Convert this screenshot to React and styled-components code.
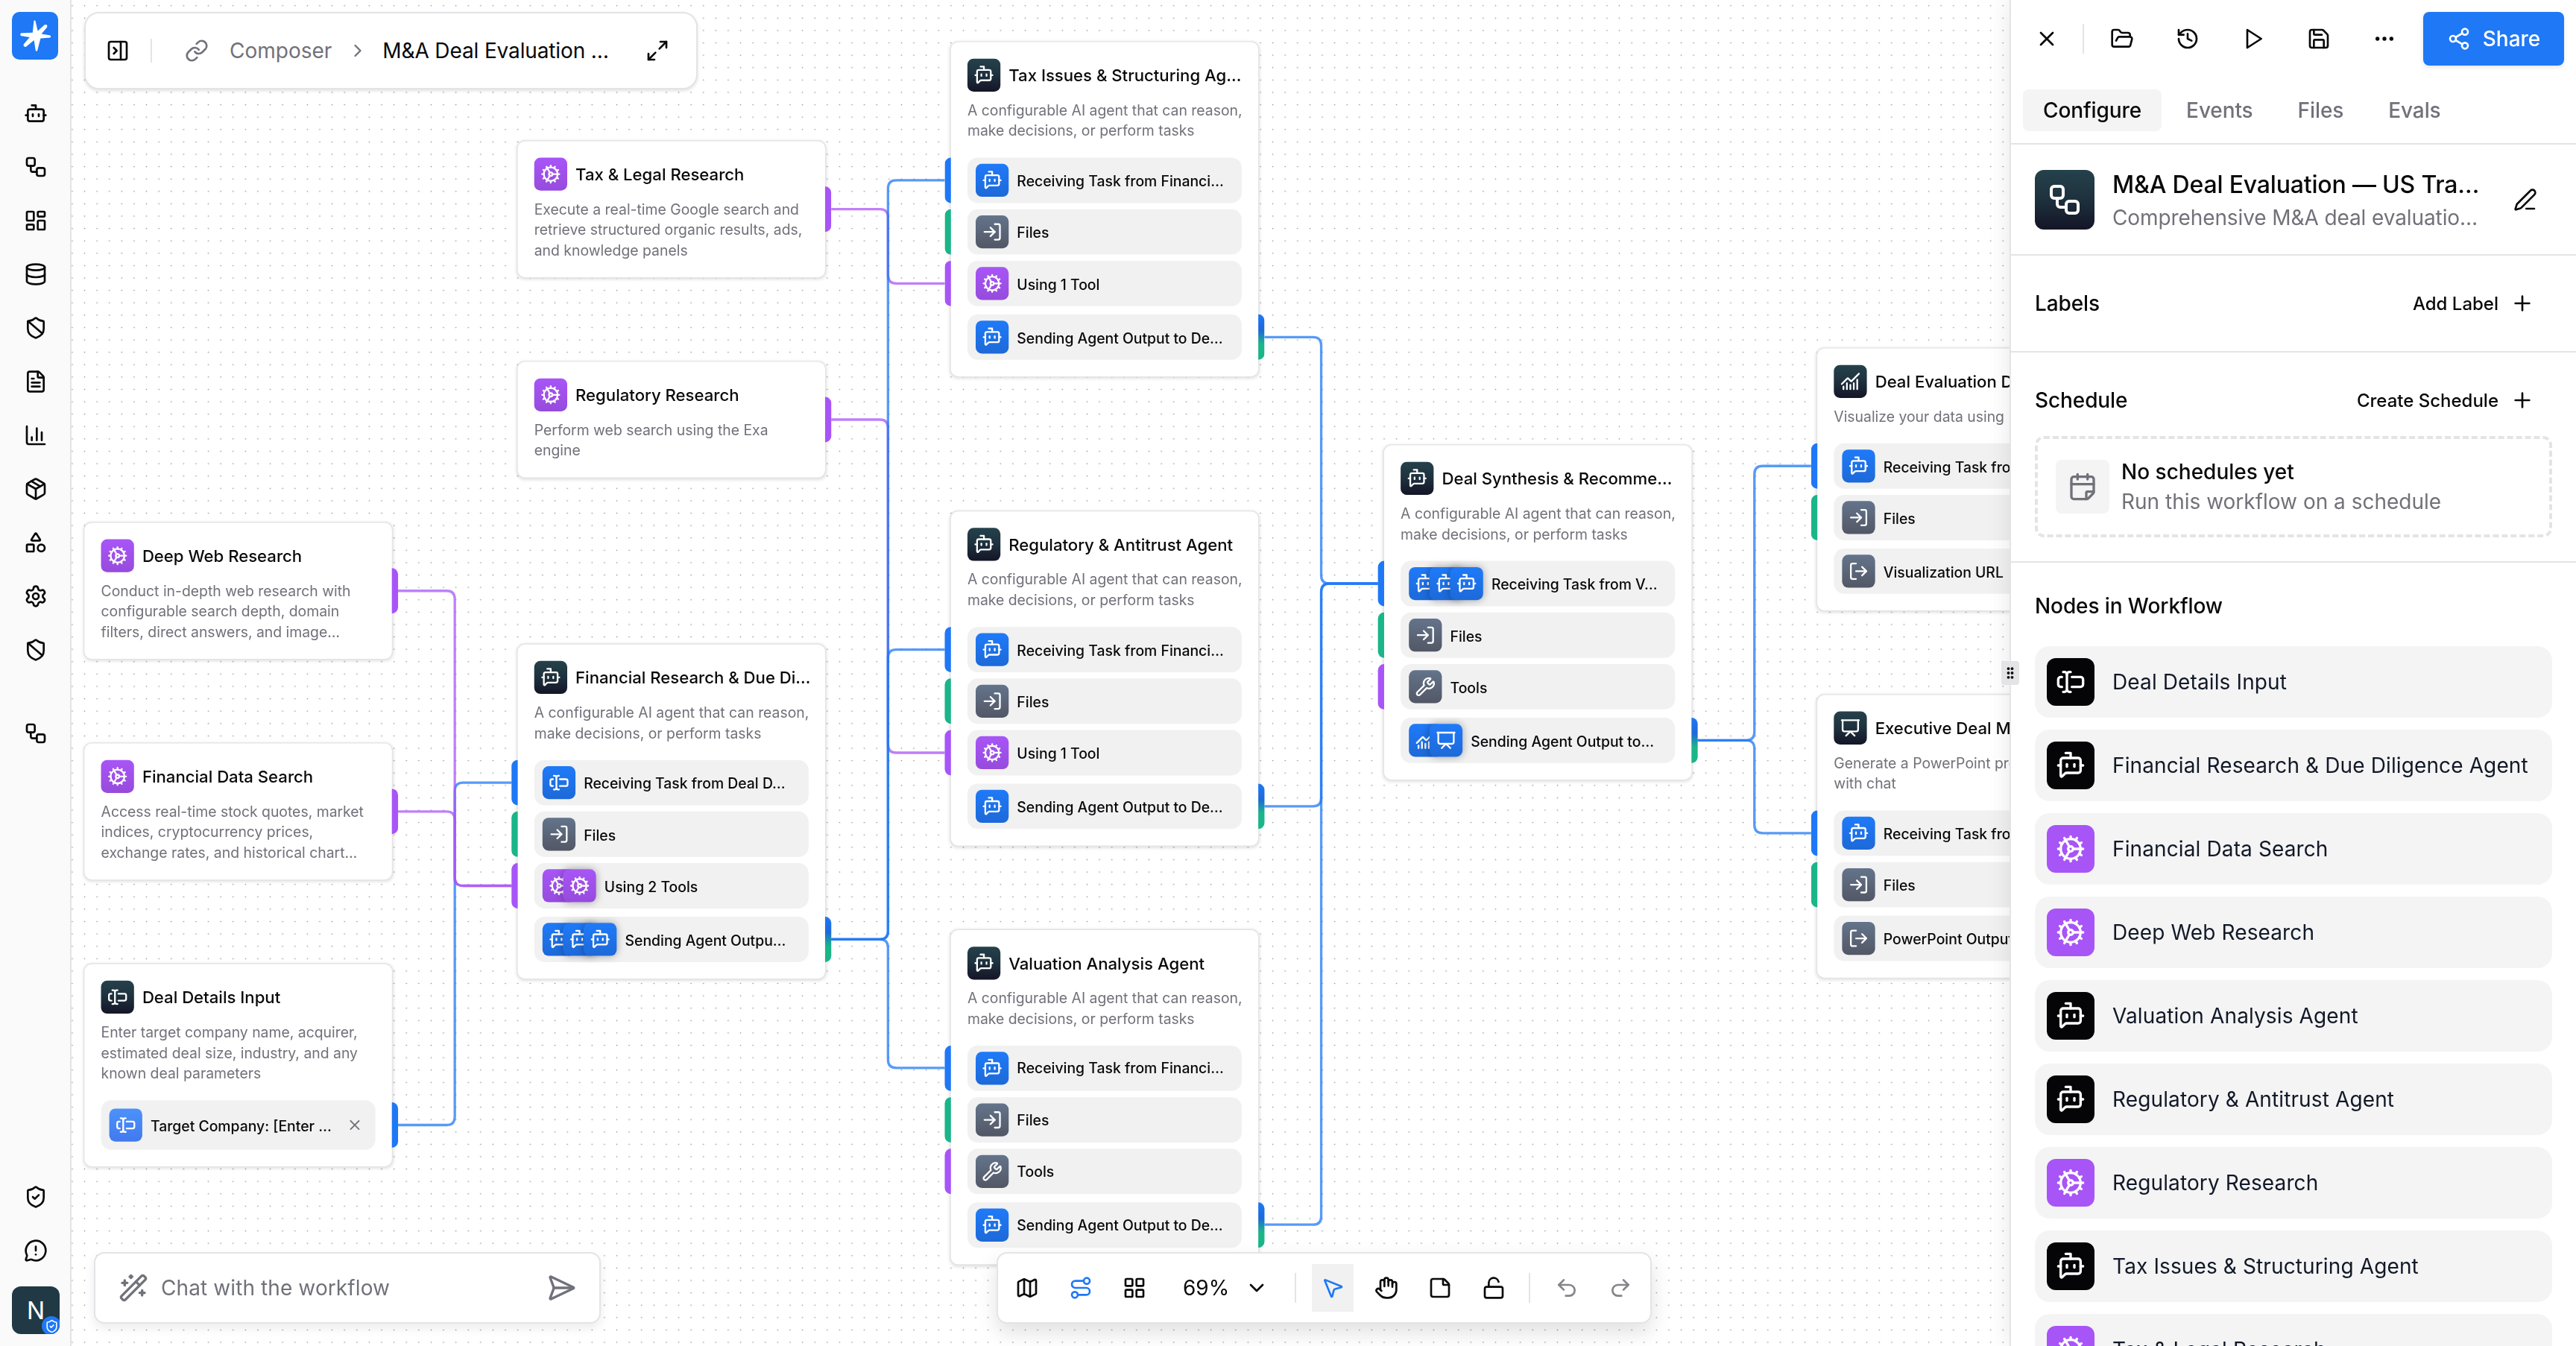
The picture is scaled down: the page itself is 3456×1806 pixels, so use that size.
import React from "react";
import styled, { createGlobalStyle, css } from "styled-components";
import {
  Bot,
  BotMessageSquare,
  CalendarFold,
  ChartColumn,
  ChartNoAxesCombined,
  ChevronDown,
  ChevronRight,
  Cog,
  Database,
  Ellipsis,
  FileText,
  FolderOpen,
  GripVertical,
  Hand,
  History,
  LayoutDashboard,
  LayoutGrid,
  Link,
  LockOpen,
  LogIn,
  LogOut,
  Map as MapIcon,
  Maximize2,
  MessageCircleWarning,
  MousePointer2,
  Package,
  PanelRightClose,
  PenLine,
  Plus,
  Presentation,
  Redo2,
  Route,
  Save,
  SendHorizontal,
  Settings,
  Shapes,
  Share2,
  ShieldBan,
  ShieldCheck,
  StickyNote,
  TextCursorInput,
  Undo2,
  WandSparkles,
  Workflow,
  Wrench,
  X,
} from "lucide-react";

const SCALE = 1.3838;
const BLUE = "#1f78f5";
const PURPLE = "#a855f7";
const GREEN = "#1ab588";
const INK = "#09090b";
const MUTED = "#71717a";
const LINE = "#e4e4e7";

const gradients = {
  dark: "linear-gradient(#25414b, #1f333f 45%, #141527)",
  blue: "linear-gradient(#1f7af8, #1d69d8)",
  sky: "linear-gradient(#4c92fa, #4279ee)",
  purple: "linear-gradient(#a855f7, #964bdc)",
  slate: "linear-gradient(#64748b, #525765)",
  black: "#050507",
  violet: PURPLE,
};

const sidebarIcons = [
  Bot,
  Workflow,
  LayoutDashboard,
  Database,
  ShieldBan,
  FileText,
  ChartColumn,
  Package,
  Shapes,
  Settings,
  ShieldBan,
];

const AGENT_TEXT = ["A configurable AI agent that can reason,", "make decisions, or perform tasks"];

const files = { icons: [LogIn], tone: "slate", label: "Files", port: GREEN };
const noTools = { icons: [Wrench], tone: "slate", label: "Tools", port: PURPLE };
const oneTool = { icons: [Cog], tone: "purple", label: "Using 1 Tool", port: PURPLE };
const fromFinance = {
  icons: [BotMessageSquare],
  tone: "blue",
  label: "Receiving Task from Financi…",
  port: BLUE,
};
const toDeal = { icons: [BotMessageSquare], tone: "blue", label: "Sending Agent Output to De…" };

const nodes = [
  {
    x: 0,
    y: 0,
    icon: Cog,
    tone: "purple",
    title: "Deep Web Research",
    text: ["Conduct in-depth web research with", "configurable search depth, domain", "filters, direct answers, and image…"],
    tool: true,
  },
  {
    x: 0,
    y: 214,
    icon: Cog,
    tone: "purple",
    title: "Financial Data Search",
    text: ["Access real-time stock quotes, market", "indices, cryptocurrency prices,", "exchange rates, and historical chart…"],
    tool: true,
  },
  {
    x: 0,
    y: 428,
    icon: TextCursorInput,
    tone: "dark",
    title: "Deal Details Input",
    text: ["Enter target company name, acquirer,", "estimated deal size, industry, and any", "known deal parameters"],
    field: "Target Company: [Enter …",
  },
  {
    x: 420,
    y: -370,
    icon: Cog,
    tone: "purple",
    title: "Tax & Legal Research",
    text: ["Execute a real-time Google search and", "retrieve structured organic results, ads,", "and knowledge panels"],
    tool: true,
  },
  {
    x: 420,
    y: -156,
    icon: Cog,
    tone: "purple",
    title: "Regulatory Research",
    text: ["Perform web search using the Exa", "engine"],
    tool: true,
  },
  {
    x: 420,
    y: 118,
    icon: BotMessageSquare,
    tone: "dark",
    title: "Financial Research & Due Di…",
    text: AGENT_TEXT,
    inputs: [
      { icons: [TextCursorInput], tone: "blue", label: "Receiving Task from Deal D…", port: BLUE },
      files,
      { icons: [Cog, Cog], tone: "purple", label: "Using 2 Tools", port: PURPLE },
    ],
    output: {
      icons: [BotMessageSquare, BotMessageSquare, BotMessageSquare],
      tone: "blue",
      label: "Sending Agent Outpu…",
    },
  },
  {
    x: 840,
    y: -466,
    icon: BotMessageSquare,
    tone: "dark",
    title: "Tax Issues & Structuring Ag…",
    text: AGENT_TEXT,
    inputs: [fromFinance, files, oneTool],
    output: toDeal,
  },
  {
    x: 840,
    y: -11,
    icon: BotMessageSquare,
    tone: "dark",
    title: "Regulatory & Antitrust Agent",
    text: AGENT_TEXT,
    inputs: [fromFinance, files, oneTool],
    output: toDeal,
  },
  {
    x: 840,
    y: 394.6,
    icon: BotMessageSquare,
    tone: "dark",
    title: "Valuation Analysis Agent",
    text: AGENT_TEXT,
    inputs: [fromFinance, files, noTools],
    output: toDeal,
  },
  {
    x: 1260,
    y: -75,
    icon: BotMessageSquare,
    tone: "dark",
    title: "Deal Synthesis & Recomme…",
    text: AGENT_TEXT,
    inputs: [
      {
        icons: [BotMessageSquare, BotMessageSquare, BotMessageSquare],
        tone: "blue",
        label: "Receiving Task from V…",
        port: BLUE,
      },
      files,
      noTools,
    ],
    output: { icons: [ChartNoAxesCombined, Presentation], tone: "blue", label: "Sending Agent Output to…" },
  },
  {
    x: 1680,
    y: -169,
    icon: ChartNoAxesCombined,
    tone: "dark",
    title: "Deal Evaluation Da…",
    text: ["Visualize your data using li…"],
    inputs: [{ ...fromFinance, label: "Receiving Task from D…" }, files],
    output: { icons: [LogOut], tone: "slate", label: "Visualization URL", quiet: true },
  },
  {
    x: 1680,
    y: 167,
    icon: Presentation,
    tone: "dark",
    title: "Executive Deal Me…",
    text: ["Generate a PowerPoint presen…", "with chat"],
    inputs: [{ ...fromFinance, label: "Receiving Task from D…" }, files],
    output: { icons: [LogOut], tone: "slate", label: "PowerPoint Output", quiet: true },
  },
];

// [source x, source y, target x, target y, colour]
const edges = [
  [725, -303, 835, -231, PURPLE],
  [725, -99, 835, 224, PURPLE],
  [725, 405, 835, -331, BLUE],
  [725, 405, 835, 124, BLUE],
  [725, 405, 835, 529.6, BLUE],
  [305, 585, 415, 253, BLUE],
  [305, 67, 415, 353, PURPLE],
  [305, 281, 415, 353, PURPLE],
  [1145, -179, 1255, 60, BLUE],
  [1145, 276, 1255, 60, BLUE],
  [1145, 681.6, 1255, 60, BLUE],
  [1565, 212, 1675, -54, BLUE],
  [1565, 212, 1675, 302, BLUE],
];

const workflowNodes = [
  [TextCursorInput, "black", "Deal Details Input"],
  [BotMessageSquare, "black", "Financial Research & Due Diligence Agent"],
  [Cog, "violet", "Financial Data Search"],
  [Cog, "violet", "Deep Web Research"],
  [BotMessageSquare, "black", "Valuation Analysis Agent"],
  [BotMessageSquare, "black", "Regulatory & Antitrust Agent"],
  [Cog, "violet", "Regulatory Research"],
  [BotMessageSquare, "black", "Tax Issues & Structuring Agent"],
  [Cog, "violet", "Tax & Legal Research"],
];

function stepPath([sx, sy, tx, ty]) {
  const mid = (sx + tx) / 2;
  const r = 8;
  const d = ty > sy ? 1 : -1;
  return `M${sx} ${sy} H${mid - r} Q${mid} ${sy} ${mid} ${sy + r * d} V${ty - r * d} Q${mid} ${ty} ${mid + r} ${ty} H${tx}`;
}

function PlayIcon() {
  return (
    <svg width="32" height="32" viewBox="0 0 24 24" fill="none" stroke="currentColor" strokeWidth="2" strokeLinejoin="round">
      <path d="M6 3 20 12 6 21Z" />
    </svg>
  );
}

function StarLogo() {
  return (
    <svg width="44" height="44" viewBox="0 0 44 44" fill="#fff">
      <path d="M20.4 2.2Q21.4 .2 22.6 2.2L25.6 15.4 34.8 7.2Q39.2 6.6 38.2 10.4L30.6 19.4 42.4 21.4Q44 22.8 42.4 24.4L29.4 25.6 25.2 41.8Q24 43.8 22.8 41.8L20.6 28 9.6 37Q6 37 6.6 33.6L14.8 24 3 22Q1.2 20.4 3 18.6L18.8 17.8Z" />
    </svg>
  );
}

function Row({ item, side }) {
  return (
    <RowWrap>
      {side === "in" && <Port side="left" fill={item.port} />}
      {side === "out" && !item.quiet && <Port side="right" fill={`linear-gradient(${BLUE}, #1d69d8 35%, ${GREEN} 65%)`} />}
      <RowBody>
        <IconStack>
          {item.icons.map((Icon, i) => (
            <Tile key={i} tone={item.tone} stacked={i > 0}>
              <Icon size={20} />
            </Tile>
          ))}
        </IconStack>
        <RowLabel>{item.label}</RowLabel>
      </RowBody>
    </RowWrap>
  );
}

function Node({ node }) {
  const Icon = node.icon;
  return (
    <NodeBox style={{ left: node.x, top: node.y }}>
      {node.tool && <Port side="right" fill={PURPLE} middle />}
      <NodeCard>
        <NodeHead>
          <Tile tone={node.tone}>
            <Icon size={20} />
          </Tile>
          <NodeTitle>{node.title}</NodeTitle>
        </NodeHead>
        <NodeText>
          {node.text.map((line) => (
            <div key={line}>{line}</div>
          ))}
        </NodeText>
        {node.field && (
          <RowWrap push>
            <Port side="right" fill={BLUE} inset={2} />
            <RowBody tall>
              <Tile tone="sky">
                <TextCursorInput size={20} />
              </Tile>
              <RowLabel>{node.field}</RowLabel>
              <ClearIcon size={16} />
            </RowBody>
          </RowWrap>
        )}
        {node.inputs && (
          <RowList>
            {node.inputs.map((item) => (
              <Row key={item.label} item={item} side="in" />
            ))}
          </RowList>
        )}
        {node.output && (
          <OutputList>
            <Row item={node.output} side="out" />
          </OutputList>
        )}
      </NodeCard>
    </NodeBox>
  );
}

export default function App() {
  return (
    <Shell>
      <GlobalStyle />
      <Sidebar>
        <Logo>
          <StarLogo />
        </Logo>
        <SideNav>
          {sidebarIcons.map((Icon, i) => (
            <SideItem key={i}>
              <Icon size={32} />
            </SideItem>
          ))}
        </SideNav>
        <SidePinned>
          <Workflow size={32} />
        </SidePinned>
        <SideFoot>
          <SideItem>
            <ShieldCheck size={32} />
          </SideItem>
          <SideItem>
            <MessageCircleWarning size={32} />
          </SideItem>
        </SideFoot>
        <Avatar>
          N
          <AvatarBadge>
            <ShieldCheck size={19} />
          </AvatarBadge>
        </Avatar>
      </Sidebar>

      <Canvas>
        <Dots>
          <defs>
            <pattern id="dots" x="-7.4" y="-0.65" width="16.605" height="16.605" patternUnits="userSpaceOnUse">
              <circle cx="8.3" cy="8.3" r="0.85" fill="#94949a" />
            </pattern>
          </defs>
          <rect width="100%" height="100%" fill="url(#dots)" />
        </Dots>
        <Viewport>
          <Edges>
            {edges.map((edge, i) => (
              <path key={i} d={stepPath(edge)} stroke={edge[4]} />
            ))}
          </Edges>
          {nodes.map((node) => (
            <Node key={node.title} node={node} />
          ))}
        </Viewport>

        <Breadcrumb>
          <PanelRightClose size={32} />
          <BarRule />
          <Crumb>
            <Link size={32} />
            <span>Composer</span>
            <ChevronRight size={28} />
          </Crumb>
          <CrumbTitle>M&amp;A Deal Evaluation …</CrumbTitle>
          <Maximize2 size={32} />
        </Breadcrumb>

        <ChatBox>
          <WandSparkles size={40} />
          <ChatHint>Chat with the workflow</ChatHint>
          <SendHorizontal size={40} />
        </ChatBox>

        <Toolbar>
          <Tool>
            <MapIcon size={32} />
          </Tool>
          <Tool accent>
            <Route size={32} />
          </Tool>
          <Tool>
            <LayoutGrid size={32} />
          </Tool>
          <ZoomLevel>
            69%
            <ChevronDown size={32} />
          </ZoomLevel>
          <ToolRule />
          <Tool accent active>
            <MousePointer2 size={32} />
          </Tool>
          <Tool>
            <Hand size={32} />
          </Tool>
          <Tool>
            <StickyNote size={32} />
          </Tool>
          <Tool>
            <LockOpen size={32} />
          </Tool>
          <ToolRule />
          <Tool faded>
            <Undo2 size={32} />
          </Tool>
          <Tool faded>
            <Redo2 size={32} />
          </Tool>
        </Toolbar>
      </Canvas>

      <Panel>
        <Grip>
          <GripVertical size={20} strokeWidth={2.6} />
        </Grip>
        <PanelHead>
          <Actions>
            <IconButton>
              <X size={32} />
            </IconButton>
            <ActionRule />
            <IconButton>
              <FolderOpen size={32} />
            </IconButton>
            <IconButton>
              <History size={32} />
            </IconButton>
            <IconButton>
              <PlayIcon />
            </IconButton>
            <IconButton>
              <Save size={32} />
            </IconButton>
            <IconButton>
              <Ellipsis size={32} />
            </IconButton>
            <ShareButton>
              <Share2 size={32} />
              Share
            </ShareButton>
          </Actions>
          <Tabs>
            <Tab active>Configure</Tab>
            <Tab>Events</Tab>
            <Tab>Files</Tab>
            <Tab>Evals</Tab>
          </Tabs>
        </PanelHead>

        <Info>
          <InfoIcon>
            <Workflow size={48} />
          </InfoIcon>
          <InfoText>
            <InfoTitle>M&amp;A Deal Evaluation — US Tra…</InfoTitle>
            <InfoDesc>Comprehensive M&amp;A deal evaluatio…</InfoDesc>
          </InfoText>
          <PenLine size={32} />
        </Info>

        <Section>
          <SectionHead>
            <SectionTitle>Labels</SectionTitle>
            <AddButton>
              Add Label
              <Plus size={32} />
            </AddButton>
          </SectionHead>
        </Section>

        <Section>
          <SectionHead>
            <SectionTitle>Schedule</SectionTitle>
            <AddButton>
              Create Schedule
              <Plus size={32} />
            </AddButton>
          </SectionHead>
          <EmptyCard>
            <EmptyIcon>
              <CalendarFold size={40} />
            </EmptyIcon>
            <div>
              <EmptyTitle>No schedules yet</EmptyTitle>
              <EmptyText>Run this workflow on a schedule</EmptyText>
            </div>
          </EmptyCard>
        </Section>

        <NodeSection>
          <SectionTitle>Nodes in Workflow</SectionTitle>
          <NodeList>
            {workflowNodes.map(([Icon, tone, name]) => (
              <NodeItem key={name}>
                <NodeItemIcon tone={tone}>
                  <Icon size={40} />
                </NodeItemIcon>
                {name}
              </NodeItem>
            ))}
          </NodeList>
        </NodeSection>
      </Panel>
    </Shell>
  );
}

const GlobalStyle = createGlobalStyle`
  * {
    box-sizing: border-box;
  }

  body {
    margin: 0;
    background: #fff;
    color: ${INK};
    font-family: Inter, "Liberation Sans", sans-serif;
    font-size: 28px;
    -webkit-font-smoothing: antialiased;
  }

  svg {
    flex-shrink: 0;
  }
`;

const Shell = styled.div`
  display: flex;
  height: 1806px;
  overflow: hidden;
`;

const Sidebar = styled.nav`
  display: flex;
  flex-direction: column;
  width: 96px;
  padding: 16px 0 16px 16px;
  background: #fafafa;
  border-right: 2px solid ${LINE};
`;

const Logo = styled.div`
  display: flex;
  align-items: center;
  justify-content: center;
  width: 62px;
  height: 64px;
  border-radius: 10px;
  background: ${BLUE};
`;

const SideNav = styled.div`
  margin-top: 36px;
`;

const SideItem = styled.div`
  display: flex;
  align-items: center;
  justify-content: center;
  width: 64px;
  height: 72px;
`;

const SidePinned = styled(SideItem)`
  margin-top: 40px;
`;

const SideFoot = styled.div`
  margin-top: auto;
  margin-bottom: 12px;
`;

const Avatar = styled.div`
  position: relative;
  display: flex;
  align-items: center;
  justify-content: center;
  width: 64px;
  height: 64px;
  border-radius: 12px;
  overflow: hidden;
  background: #213945;
  color: #fff;
  font-size: 32px;
`;

const AvatarBadge = styled.span`
  position: absolute;
  right: -2px;
  bottom: -2px;
  display: flex;
  align-items: center;
  justify-content: center;
  width: 26px;
  height: 26px;
  border-radius: 50%;
  background: ${BLUE};
`;

const Canvas = styled.main`
  position: relative;
  flex: 1;
  overflow: hidden;
`;

const Dots = styled.svg`
  position: absolute;
  inset: 0;
  width: 100%;
  height: 100%;
`;

const Viewport = styled.div`
  position: absolute;
  left: 16.4px;
  top: 699.8px;
  transform: scale(${SCALE});
  transform-origin: 0 0;
`;

const Edges = styled.svg`
  position: absolute;
  left: 0;
  top: 0;
  width: 1px;
  height: 1px;
  overflow: visible;
  fill: none;
  stroke-width: 2.4;

  path {
    stroke-opacity: 0.75;
  }
`;

const NodeBox = styled.div`
  position: absolute;
  width: 300px;
`;

const NodeCard = styled.div`
  padding: 16px;
  border: 1px solid ${LINE};
  border-radius: 8px;
  background: #fff;
  box-shadow: 0 1px 3px rgba(0, 0, 0, 0.12);
`;

const NodeHead = styled.div`
  display: flex;
  align-items: center;
  gap: 8px;
`;

const NodeTitle = styled.div`
  font-size: 16px;
  font-weight: 500;
  line-height: 24px;
  white-space: nowrap;
`;

const NodeText = styled.div`
  margin-top: 8px;
  color: ${MUTED};
  font-size: 14px;
  line-height: 20px;
  white-space: nowrap;
`;

const Tile = styled.div`
  display: flex;
  align-items: center;
  justify-content: center;
  flex-shrink: 0;
  width: 32px;
  height: 32px;
  border-radius: 6px;
  background: ${(p) => gradients[p.tone]};
  color: #fff;
  ${(p) =>
    p.stacked &&
    css`
      margin-left: -12px;
      box-shadow: 0 0 8px rgba(0, 0, 0, 0.35);
    `}
`;

const RowList = styled.div`
  display: flex;
  flex-direction: column;
  gap: 6px;
  margin-top: 16px;
`;

const OutputList = styled.div`
  margin-top: 8px;
`;

const RowWrap = styled.div`
  position: relative;
  ${(p) => p.push && "margin-top: 16px;"}
`;

const RowBody = styled.div`
  display: flex;
  align-items: center;
  gap: 8px;
  height: ${(p) => (p.tall ? 48 : 44)}px;
  padding: 0 8px;
  border-radius: 10px;
  background: #f1f1f2;
`;

const IconStack = styled.div`
  display: flex;
`;

const RowLabel = styled.div`
  flex: 1;
  font-size: 14px;
  font-weight: 500;
  white-space: nowrap;
`;

const ClearIcon = styled(X)`
  margin-right: 4px;
  color: ${MUTED};
`;

// connection tab that sticks out of the card edge
const Port = styled.span`
  position: absolute;
  top: ${(p) => (p.middle ? "calc(50% - 22px)" : `${p.inset || 0}px`)};
  ${(p) => p.side}: ${(p) => (p.middle ? -5 : -22)}px;
  width: 6px;
  height: 44px;
  border-radius: ${(p) => (p.side === "left" ? "6px 0 0 6px" : "0 6px 6px 0")};
  background: ${(p) => p.fill};
`;

const floating = css`
  position: absolute;
  display: flex;
  align-items: center;
  border: 2px solid ${LINE};
  background: #fff;
`;

const Breadcrumb = styled.header`
  ${floating}
  left: 17px;
  top: 16px;
  width: 823px;
  height: 104px;
  padding: 0 36px 0 27px;
  border-radius: 20px;
  box-shadow: 0 2px 4px rgba(0, 0, 0, 0.12);
`;

const BarRule = styled.span`
  width: 2px;
  height: 32px;
  margin: 0 44px 0 28px;
  background: ${LINE};
`;

const Crumb = styled.div`
  display: flex;
  align-items: center;
  gap: 28px;
  color: ${MUTED};

  svg:last-child {
    margin-left: -7px;
  }
`;

const CrumbTitle = styled.div`
  flex: 1;
  margin-left: 19px;
  letter-spacing: -0.13px;
  white-space: nowrap;
`;

const ChatBox = styled.div`
  ${floating}
  left: 30px;
  bottom: 30px;
  width: 680px;
  height: 96px;
  padding: 0 31px;
  border-radius: 14px;
  color: ${MUTED};
  box-shadow: 0 6px 14px rgba(0, 0, 0, 0.08);
`;

const ChatHint = styled.div`
  flex: 1;
  margin-left: 17px;
  letter-spacing: 0.1px;
`;

const Toolbar = styled.div`
  ${floating}
  left: 1241px;
  bottom: 30px;
  width: 879px;
  height: 96px;
  gap: 16px;
  padding: 0 11px;
  border-radius: 14px;
  box-shadow: 0 12px 28px rgba(0, 0, 0, 0.12);
`;

const Tool = styled.div`
  display: flex;
  align-items: center;
  justify-content: center;
  flex-shrink: 0;
  width: 56px;
  height: 64px;
  background: ${(p) => (p.active ? "#f1f1f2" : "transparent")};
  color: ${(p) => (p.accent ? BLUE : p.faded ? "#84848a" : INK)};
`;

const ZoomLevel = styled.div`
  display: flex;
  align-items: center;
  justify-content: space-between;
  width: 115px;
  margin: 0 16px 0 21px;
`;

const ToolRule = styled.span`
  width: 2px;
  height: 40px;
  margin: 0 5px 0 3px;
  background: ${LINE};
`;

const Panel = styled.aside`
  position: relative;
  display: flex;
  flex-direction: column;
  width: 760px;
  border-left: 2px solid ${LINE};
  background: #fff;
  box-shadow: 0 0 30px rgba(0, 0, 0, 0.1);
`;

const Grip = styled.div`
  position: absolute;
  left: -13px;
  top: 887px;
  display: flex;
  align-items: center;
  justify-content: center;
  width: 24px;
  height: 32px;
  border-radius: 4px;
  background: ${LINE};
`;

const PanelHead = styled.div`
  flex-shrink: 0;
  height: 194px;
  padding: 16px;
  border-bottom: 2px solid ${LINE};
`;

const Actions = styled.div`
  display: flex;
  align-items: center;
  gap: 24px;
  height: 72px;
`;

const IconButton = styled.div`
  display: flex;
  align-items: center;
  justify-content: center;
  flex-shrink: 0;
  width: 64px;
  height: 64px;
`;

const ActionRule = styled.span`
  width: 2px;
  height: 40px;
  margin: 0 -5px 0 -8px;
  background: ${LINE};
`;

const ShareButton = styled.div`
  display: flex;
  align-items: center;
  justify-content: center;
  flex-shrink: 0;
  gap: 16px;
  width: 189px;
  height: 72px;
  margin-left: -4px;
  border-radius: 8px;
  background: ${BLUE};
  color: #fff;
  font-weight: 500;
  box-shadow: 0 2px 6px rgba(0, 0, 0, 0.1);
`;

const Tabs = styled.div`
  display: flex;
  gap: 6px;
  margin-top: 32px;
`;

const Tab = styled.div`
  height: 56px;
  padding: 0 27px;
  border-radius: 8px;
  background: ${(p) => (p.active ? "#f4f4f4" : "transparent")};
  color: ${(p) => (p.active ? INK : MUTED)};
  font-weight: 500;
  letter-spacing: -0.1px;
  line-height: 56px;
`;

const Info = styled.div`
  display: flex;
  align-items: center;
  flex-shrink: 0;
  height: 149px;
  padding: 0 52px 0 32px;
  border-bottom: 2px solid ${LINE};
`;

const InfoIcon = styled.div`
  display: flex;
  align-items: center;
  justify-content: center;
  width: 80px;
  height: 80px;
  border-radius: 12px;
  background: ${gradients.dark};
  color: #fff;
`;

const InfoText = styled.div`
  flex: 1;
  margin-left: 24px;
  white-space: nowrap;
`;

const InfoTitle = styled.div`
  font-size: 32px;
  font-weight: 500;
  letter-spacing: -0.18px;
  line-height: 48px;
`;

const InfoDesc = styled.div`
  color: ${MUTED};
  letter-spacing: -0.1px;
  line-height: 40px;
`;

const Section = styled.section`
  flex-shrink: 0;
  padding: 32px;
  border-bottom: 2px solid ${LINE};
`;

const SectionHead = styled.div`
  display: flex;
  align-items: center;
  justify-content: space-between;
  height: 64px;
`;

const SectionTitle = styled.div`
  font-weight: 500;
  letter-spacing: -0.1px;
`;

const AddButton = styled.div`
  display: flex;
  align-items: center;
  gap: 16px;
  padding: 0 24px;
  font-size: 24px;
  font-weight: 500;
`;

const EmptyCard = styled.div`
  display: flex;
  align-items: center;
  gap: 16px;
  height: 136px;
  margin-top: 16px;
  padding: 0 24px;
  border: 4px dashed ${LINE};
  border-radius: 12px;
`;

const EmptyIcon = styled.div`
  display: flex;
  align-items: center;
  justify-content: center;
  width: 72px;
  height: 72px;
  border-radius: 8px;
  background: #f4f4f4;
  color: ${MUTED};
`;

const EmptyTitle = styled.div`
  font-weight: 500;
  line-height: 40px;
`;

const EmptyText = styled.div`
  color: ${MUTED};
  line-height: 40px;
`;

const NodeSection = styled.section`
  flex-shrink: 0;
  padding: 32px;

  > ${SectionTitle} {
    line-height: 52px;
  }
`;

const NodeList = styled.div`
  display: flex;
  flex-direction: column;
  gap: 16px;
  margin-top: 28px;
`;

const NodeItem = styled.div`
  display: flex;
  align-items: center;
  gap: 24px;
  height: 96px;
  padding: 0 16px;
  border-radius: 20px;
  background: #f4f4f4;
  color: #111827;
  letter-spacing: 0.12px;
`;

const NodeItemIcon = styled.div`
  display: flex;
  align-items: center;
  justify-content: center;
  width: 64px;
  height: 64px;
  border-radius: 12px;
  background: ${(p) => gradients[p.tone]};
  color: #fff;
`;
